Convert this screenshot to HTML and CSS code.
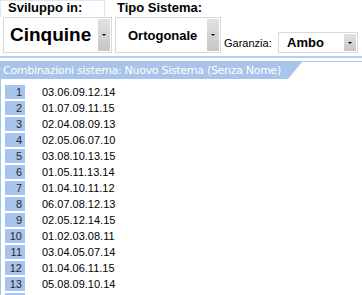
FILE: index.html
```html
<!doctype html>

<html lang="it">

<head>
  <meta charset="utf-8">
  <title>Sistema</title>
  <link rel="stylesheet" href="styles.css">
</head>

<body>
  <div class="toolbar">
    <div class="field">
      <div class="field-label tab">Sviluppo in:</div>
      <div class="combo combo-big">
        <span class="combo-value">Cinquine</span>
        <span class="combo-btn"></span>
      </div>
    </div>
    <div class="field field-mid">
      <div class="field-label">Tipo Sistema:</div>
      <div class="combo combo-mid">
        <span class="combo-value">Ortogonale</span>
        <span class="combo-btn"></span>
      </div>
    </div>
    <div class="field-inline">
      <span class="inline-label">Garanzia:</span>
      <div class="combo combo-small">
        <span class="combo-value">Ambo</span>
        <span class="combo-btn"></span>
      </div>
    </div>
  </div>

  <div class="sheet-head">
    <div class="sheet-title">Combinazioni sistema: Nuovo Sistema (Senza Nome)</div>
  </div>

  <div class="rows">
    <div class="row"><span class="num">1</span><span class="val">03.06.09.12.14</span></div>
    <div class="row"><span class="num">2</span><span class="val">01.07.09.11.15</span></div>
    <div class="row"><span class="num">3</span><span class="val">02.04.08.09.13</span></div>
    <div class="row"><span class="num">4</span><span class="val">02.05.06.07.10</span></div>
    <div class="row"><span class="num">5</span><span class="val">03.08.10.13.15</span></div>
    <div class="row"><span class="num">6</span><span class="val">01.05.11.13.14</span></div>
    <div class="row"><span class="num">7</span><span class="val">01.04.10.11.12</span></div>
    <div class="row"><span class="num">8</span><span class="val">06.07.08.12.13</span></div>
    <div class="row"><span class="num">9</span><span class="val">02.05.12.14.15</span></div>
    <div class="row"><span class="num">10</span><span class="val">01.02.03.08.11</span></div>
    <div class="row"><span class="num">11</span><span class="val">03.04.05.07.14</span></div>
    <div class="row"><span class="num">12</span><span class="val">01.04.06.11.15</span></div>
    <div class="row"><span class="num">13</span><span class="val">05.08.09.10.14</span></div>
    <div class="row"><span class="num"></span></div>
  </div>
</body>

</html>
```

FILE: styles.css
```css
html, body {
  margin: 0;
  background: #FFFFFF;
  overflow: hidden;
}
body {
  font-family: "Liberation Sans", Arial, sans-serif;
  color: #000000;
}

/* top bar with the three combos */
.toolbar {
  display: flex;
  height: 53px;
  padding: 0 0 3px 3px;
  border-bottom: 2px solid #B6CFEE;
}
.field {
  display: flex;
  flex-direction: column;
  width: 109px;
}
.field-mid {
  width: 106px;
  margin-left: 3px;
}
.field-label {
  height: 17px;
  font-size: 13px;
  font-weight: bold;
  line-height: 15px;
  padding-left: 2px;
  box-sizing: border-box;
}
.tab {
  margin-left: -3px;
  width: 105px;
  padding-left: 7px;
  border: 1px solid #DCE8F7;
  border-bottom: none;
  line-height: 13px;
}
.combo {
  display: flex;
  align-items: center;
  border: 1px solid #D8D8D8;
  background: #FFFFFF;
  box-sizing: border-box;
}
.combo-value {
  flex: 1;
  font-weight: bold;
  white-space: nowrap;
}
.combo-btn {
  position: relative;
  align-self: stretch;
  width: 12px;
  margin: 1px 1px 1px 0;
  background: linear-gradient(to bottom, #E2E2E2, #C6C6C6);
}
.combo-btn::after {
  content: "";
  position: absolute;
  left: 4px;
  top: 50%;
  margin-top: -1px;
  border-left: 2px solid transparent;
  border-right: 2px solid transparent;
  border-top: 2px solid #000000;
}
.combo-big {
  height: 36px;
}
.combo-big .combo-value {
  font-size: 19px;
  padding-left: 6px;
}
.combo-mid {
  height: 36px;
}
.combo-mid .combo-value {
  font-size: 13px;
  padding-left: 12px;
}
.field-inline {
  display: flex;
  align-items: center;
  align-self: flex-end;
  margin-left: 3px;
}
.inline-label {
  width: 54px;
  font-size: 11px;
}
.combo-small {
  width: 80px;
  height: 21px;
}
.combo-small .combo-value {
  font-size: 13px;
  padding-left: 8px;
}

/* sheet header band */
.sheet-head {
  margin-top: 3px;
  border-top: 1px solid #A8C4EA;
}
.sheet-title {
  width: 302px;
  height: 17px;
  background: #A8C4EA;
  color: #FFFFFF;
  font-family: "DejaVu Sans", Verdana, sans-serif;
  font-size: 11px;
  letter-spacing: -0.3px;
  line-height: 17px;
  padding-left: 3px;
  box-sizing: border-box;
  white-space: nowrap;
  overflow: hidden;
  clip-path: polygon(0 0, 100% 0, calc(100% - 14px) 100%, 0 100%);
}

/* combinations list */
.rows {
  border-left: 1px solid #A8C4EA;
  padding-top: 6px;
  height: 300px;
}
.row {
  display: flex;
  height: 14px;
  margin-bottom: 2px;
  font-size: 11px;
  line-height: 14px;
}
.num {
  width: 20px;
  margin-left: 4px;
  padding-right: 3px;
  box-sizing: border-box;
  background: #A8C4EC;
  color: #232B3A;
  text-align: right;
}
.val {
  margin-left: 17px;
}
```
